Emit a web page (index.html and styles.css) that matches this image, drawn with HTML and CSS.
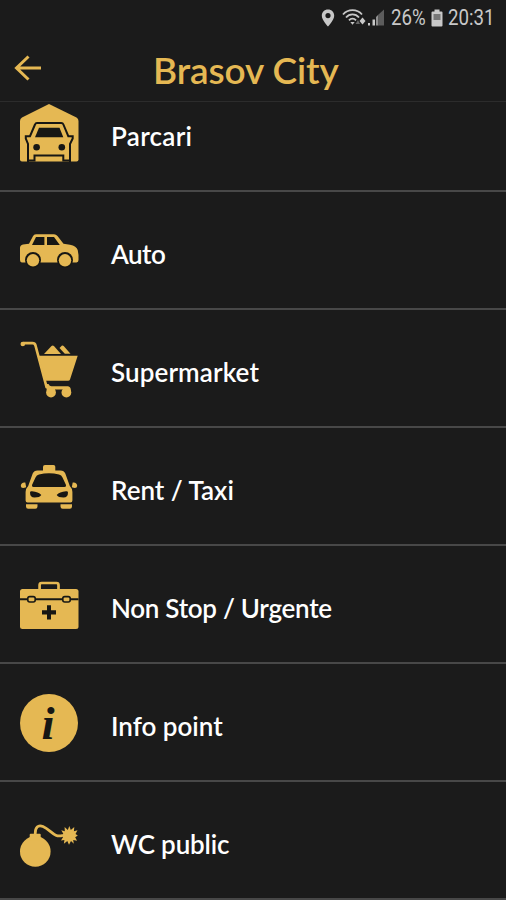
FILE: index.html
```html
<!DOCTYPE html>
<html lang="ro">
<head>
    <meta charset="UTF-8">
    <meta name="viewport" content="width=device-width, initial-scale=1.0">
    <title>Brasov City</title>
    <link rel="stylesheet" href="styles.css">
</head>
<body>
    <div class="status-bar">
        <svg class="pin" width="14" height="18" viewBox="0 0 14 18">
            <path fill-rule="evenodd" d="M7 0.5C3.3 0.5 0.8 3.2 0.8 6.7C0.8 11 7 17.5 7 17.5S13.2 11 13.2 6.7C13.2 3.2 10.7 0.5 7 0.5ZM7 4A2.6 2.6 0 1 1 7 9.2A2.6 2.6 0 1 1 7 4Z"/>
        </svg>
        <svg class="wifi" width="24" height="18" viewBox="0 0 24 18">
            <g fill="none" stroke="#c8c8c8" stroke-width="1.8">
                <path d="M1 5.5C6 -0.3 15 -0.3 20 5.5"/>
                <path d="M4 8.5C7.5 4.3 13.5 4.3 17 8.5"/>
                <path d="M7 11.3C9 9 12 9 14 11.3"/>
            </g>
            <path d="M8.3 13H12.7L10.5 15.8Z"/>
            <path d="M17.5 12L20.5 8.5L23.5 12L20.5 15.5Z"/>
            <path fill="#666" d="M13.5 15L16 11L18 15Z"/>
        </svg>
        <svg class="signal" width="18" height="18" viewBox="0 0 18 18">
            <path d="M1 14H3V16.5H1ZM5.5 10.5H8V16.5H5.5Z"/>
            <path fill="#909090" d="M9 8L11.5 5.5V16.5H9Z"/>
            <path fill="#5c5c5c" d="M11.5 5.5L17 0.5V16.5H11.5Z"/>
        </svg>
        <span class="percent">26%</span>
        <svg class="battery" width="12" height="18" viewBox="0 0 12 18">
            <path d="M3.5 0.5H8.5V2.5H10.5Q11.5 2.5 11.5 3.5V16.5Q11.5 17.5 10.5 17.5H1.5Q0.5 17.5 0.5 16.5V3.5Q0.5 2.5 1.5 2.5H3.5Z"/>
            <path fill="#777" d="M2.5 5H9.5V11H2.5Z"/>
        </svg>
        <span class="time">20:31</span>
    </div>

    <header class="header">
        <svg class="back" width="28" height="28" viewBox="0 0 28 28">
            <path d="M27 14H2.5M14.5 2.5L2.5 14L14.5 25.5"/>
        </svg>
        <h1>Brasov City</h1>
    </header>

    <main class="list-wrap">
        <ul class="list">
            <li class="item">
                <svg class="icon" viewBox="0 0 58 58">
                    <path d="M29 0L56.5 13.5Q58.5 14.5 58.5 17V55.5Q58.5 57.5 56.5 57.5H2Q0 57.5 0 55.5V17Q0 14.5 2 13.5Z"/>
                    <path class="line" d="M8 58V40L5.8 34.5V32.2H10L15 20.5Q15.6 19 17 19H41.3Q42.8 19 43.4 20.5L48.3 32.2H52.7V34.5L50 40V58"/>
                    <path class="dark" d="M15 33.2L19 23.8H39.5L43.3 33.2Z"/>
                    <circle class="dark" cx="16.6" cy="43.2" r="3.3"/>
                    <circle class="dark" cx="41.8" cy="43.2" r="3.3"/>
                    <path class="line" d="M8 56.5H14.5V51.5H43.3V56.5H50"/>
                </svg>
                <span class="label parking">Parcari</span>
            </li>
            <li class="item">
                <svg class="icon" viewBox="0 0 58 58">
                    <path d="M3 22.5L9 21.8L12.8 14.5Q13.8 12.3 16 12.3H34Q36 12.3 37.5 14L43.5 21.8L50 22.8Q56.5 24 57.7 28L58.5 33V38Q58.5 40 56.5 40.6H1.8Q0 40.3 0 38V26Q0 23 3 22.5Z"/>
                    <path class="dark" d="M12 23L16 15H24.4V23ZM27 15H34L39.8 23H27Z"/>
                    <circle class="dark" cx="13" cy="38" r="8"/>
                    <circle class="dark" cx="45" cy="38" r="8"/>
                    <circle cx="13" cy="38.3" r="6.2"/>
                    <circle cx="45" cy="38.3" r="6.2"/>
                </svg>
                <span class="label auto">Auto</span>
            </li>
            <li class="item">
                <svg class="icon" viewBox="0 0 58 58">
                    <path class="gold-line" d="M3 3.2H12.5Q14.8 3.2 15.5 5.5L26.8 48"/>
                    <circle cx="2.8" cy="4" r="2.3"/>
                    <path d="M18.5 15.7H57.7L50 39.5Q49.6 40.8 48 40.8H25.5Z"/>
                    <path d="M24 14L31.5 6Q32.7 5 33.9 6L41 14Z"/>
                    <path d="M39.5 8L42 5.5Q43 5.3 43.7 6L50.5 13.7H44.8Z"/>
                    <path d="M25 44H28.5Q29.5 46.3 31.5 46.3H48Q50.8 46.8 50.8 50V54H43V49.5H35V54H28Z"/>
                    <circle cx="31" cy="52.5" r="4.9"/>
                    <circle cx="46.4" cy="52.5" r="4.9"/>
                </svg>
                <span class="label market">Supermarket</span>
            </li>
            <li class="item">
                <svg class="icon" viewBox="0 0 58 58">
                    <path d="M23 13V8.8Q23 7 25 7H33.5Q35.3 7 35.3 8.8V13Z"/>
                    <path d="M17.5 12.5H40.5Q44 12.5 45.3 15.5L49.8 28Q52.4 30.5 52.4 34V42.5Q52.4 44.5 50.5 44.5H7.5Q5.6 44.5 5.6 42.5V34Q5.6 30.5 8.2 28L12.7 15.5Q14 12.5 17.5 12.5Z"/>
                    <path class="dark" d="M19 16.5Q29 14.2 39 16.5Q41.5 17 42.5 19.5L46 27Q46.5 29 44.5 29H13.5Q11.5 29 12 27L15.5 19.5Q16.5 17 19 16.5Z"/>
                    <path class="dark" d="M10 34.5Q10 33 12 33.2Q18.5 33.8 21.3 37Q20 39.5 14.5 39.5Q10 39.5 10 34.5ZM48 34.5Q48 33 46 33.2Q39.5 33.8 36.7 37Q38 39.5 43.5 39.5Q48 39.5 48 34.5Z"/>
                    <path d="M5.3 24.5L6.2 29.3Q1 31 0.8 28Q1 24 5.3 24.5ZM52.7 24.5L51.8 29.3Q57 31 57.2 28Q57 24 52.7 24.5Z"/>
                    <path d="M6 46.2H17.5V48.5Q17.5 50.7 15.3 50.7H8.2Q6 50.7 6 48.5ZM40.5 46.2H52V48.5Q52 50.7 49.8 50.7H42.7Q40.5 50.7 40.5 48.5Z"/>
                </svg>
                <span class="label taxi">Rent / Taxi</span>
            </li>
            <li class="item">
                <svg class="icon" viewBox="0 0 58 58">
                    <rect x="0" y="13" width="58.5" height="40" rx="2.5"/>
                    <path class="gold-line" d="M19.6 13.5V9Q19.6 7 21.6 7H36.5Q38.5 7 38.5 9V13.5"/>
                    <path class="line" d="M0 23.3H58.5"/>
                    <rect class="latch" x="7.8" y="20.6" width="7.4" height="5.4" rx="2"/>
                    <rect class="latch" x="42.8" y="20.6" width="7.4" height="5.4" rx="2"/>
                    <path class="dark" d="M27 29.3H31V34.2H36V38.4H31V43.5H27V38.4H22V34.2H27Z"/>
                </svg>
                <span class="label urgent">Non Stop / Urgente</span>
            </li>
            <li class="item">
                <svg class="icon" viewBox="0 0 58 58">
                    <circle cx="29" cy="29" r="29"/>
                    <text class="info-letter" x="21.5" y="44.5">i</text>
                </svg>
                <span class="label info">Info point</span>
            </li>
            <li class="item">
                <svg class="icon" viewBox="0 0 58 58">
                    <circle cx="15.3" cy="39.5" r="15.3"/>
                    <rect x="9.7" y="21.7" width="11" height="7" rx="1"/>
                    <path class="gold-line" d="M15.2 22C15 15.5 18 12.3 23 14.5C31 18 34 26 42.5 23.5"/>
                    <path d="M49.3 14L50.8 18L54.3 15L53.9 19.3L57.5 18.2L55.5 22L57.8 23.6L55.2 25.3L57 28.8L53.2 27.9L53.8 31.8L51 29L49 32.8L47.3 29L43.9 31.8L44.4 28L41 28.6L43 25.3L41 23.3L43.3 21.7L41.3 18.2L44.8 19.3L44.6 15L47.8 18Z"/>
                </svg>
                <span class="label wc">WC public</span>
            </li>
        </ul>
    </main>
</body>
</html>
```
FILE: styles.css
```css
* {
    box-sizing: border-box;
}
body {
    margin: 0;
    height: 900px;
    overflow: hidden;
    background-color: #1b1b1b;
    color: #fff;
    font-family: Lato, sans-serif;
}
svg {
    display: block;
    flex: none;
    overflow: visible;
}
.status-bar {
    display: flex;
    align-items: center;
    height: 36px;
    padding-left: 321px;
    fill: #c8c8c8;
    color: #c8c8c8;
    font: 22px/36px Roboto, sans-serif;
}
.wifi {
    margin-left: 7px;
}
.signal {
    margin-left: 1px;
}
.percent, .time {
    display: block;
    flex: none;
    transform: scaleX(0.85);
    transform-origin: left center;
}
.percent {
    width: 35px;
    margin-left: 6px;
}
.battery {
    margin-left: 5px;
}
.time {
    margin-left: 5px;
}
.header {
    display: flex;
    align-items: center;
    height: 66px;
    padding-left: 14px;
    border-bottom: 1px solid #2c2c2c;
}
.back {
    fill: none;
    stroke: #e5b853;
    stroke-width: 3;
    margin-bottom: 2px;
}
h1 {
    margin: 2px 0 0 111px;
    color: #e5b853;
    font-size: 37px;
    font-weight: 600;
    line-height: 44px;
    letter-spacing: -0.1px;
    white-space: nowrap;
}
.list-wrap {
    height: 798px;
    overflow: hidden;
}
.list {
    list-style: none;
    margin: -28px 0 0;
    padding: 0;
}
.item {
    display: flex;
    align-items: center;
    height: 118px;
    padding: 2px 0 0 20px;
    border-bottom: 2px solid #484848;
}
.icon {
    width: 58px;
    height: 58px;
    fill: #e5b853;
}
.dark {
    fill: #171714;
}
.line {
    fill: none;
    stroke: #171714;
    stroke-width: 2;
}
.gold-line {
    fill: none;
    stroke: #e5b853;
    stroke-width: 2.7;
}
.latch {
    stroke: #171714;
    stroke-width: 1.6;
}
.info-letter {
    fill: #171714;
    font: italic bold 47px "Liberation Serif", serif;
}
.label {
    margin: 6px 0 0 33px;
    font-size: 26px;
    font-weight: 600;
    line-height: 32px;
    white-space: nowrap;
}
.parking {
    letter-spacing: 0.3px;
}
.auto {
    letter-spacing: -0.5px;
}
.market {
    letter-spacing: 0.1px;
}
.urgent {
    letter-spacing: -0.28px;
}
.wc {
    letter-spacing: -0.15px;
}
```
